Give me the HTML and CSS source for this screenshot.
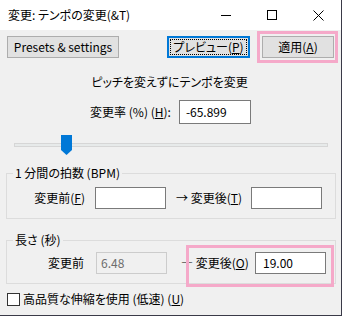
FILE: index.html
```html
<!DOCTYPE html>
<html lang="ja">
<head>
<meta charset="utf-8">
<link rel="stylesheet" href="styles.css">
</head>
<body>
<div class="win">
  <div class="titlebar">
    <div class="title">変更: テンポの変更(&amp;T)</div>
    <div class="ctrls">
      <div class="ctrl"><svg width="10" height="10" viewBox="0 0 10 10"><path d="M0 5.5H10" stroke="#000" stroke-width="1"/></svg></div>
      <div class="ctrl"><svg width="10" height="10" viewBox="0 0 10 10"><rect x="0.5" y="0.5" width="9" height="9" fill="none" stroke="#000" stroke-width="1"/></svg></div>
      <div class="ctrl"><svg width="11" height="11" viewBox="0 0 11 11"><path d="M0.5 0.5L10.5 10.5M10.5 0.5L0.5 10.5" stroke="#000" stroke-width="1"/></svg></div>
    </div>
  </div>
  <div class="body">
    <div class="toprow">
      <button class="btn presets">Presets &amp; settings</button>
      <button class="btn preview"><span class="focus">プレビュー(<u>P</u>)</span></button>
      <div class="applywrap">
        <button class="btn apply">適用(<u>A</u>)</button>
        <div class="hl hl-apply"></div>
      </div>
    </div>
    <div class="caption">ピッチを変えずにテンポを変更</div>
    <div class="raterow">
      <span class="lbl">変更率 (%) (<u>H</u>):</span>
      <div class="tb rate">-65.899</div>
    </div>
    <div class="slider">
      <div class="track"></div>
      <svg class="thumb" width="11" height="20" viewBox="0 0 11 20"><path d="M0 0H11V15L5.5 20L0 15Z" fill="#0078d7"/></svg>
    </div>
    <fieldset class="group g1">
      <legend>1 分間の拍数 (BPM)</legend>
      <div class="row">
        <span class="rl l1">変更前(<u>F</u>)</span>
        <div class="tb in1"></div>
        <span class="rl l2">→ 変更後(<u>T</u>)</span>
        <div class="tb"></div>
      </div>
    </fieldset>
    <fieldset class="group g2">
      <legend>長さ (秒)</legend>
      <div class="row">
        <span class="rl l1b">変更前</span>
        <div class="tb dis in1b">6.48</div>
        <span class="rl l2b">— 変更後(<u>O</u>)</span>
        <div class="tb in2b">19.00</div>
      </div>
      <div class="hl hl-len"></div>
    </fieldset>
    <label class="check">
      <span class="box"></span>
      <span>高品質な伸縮を使用 (低速) (<u>U</u>)</span>
    </label>
  </div>
</div>
</body>
</html>
```
FILE: styles.css
```css
* { box-sizing: border-box; }
html, body { margin: 0; padding: 0; }
body {
  width: 342px;
  height: 316px;
  overflow: hidden;
  font-family: "Noto Sans CJK JP", "Noto Sans", sans-serif;
  font-feature-settings: "palt";
  font-size: 12px;
  line-height: 16px;
  color: #000;
  background: #f0f0f0;
}
u { text-decoration: underline; text-underline-offset: 1px; }
.win {
  width: 342px;
  height: 316px;
  background: #f0f0f0;
  border-right: 1px solid #3a3a48;
  border-bottom: 1px solid #3a3a48;
  display: flex;
  flex-direction: column;
}
.titlebar {
  height: 30px;
  background: #fff;
  display: flex;
  align-items: center;
  justify-content: space-between;
  flex: none;
}
.title { padding-left: 8px; font-size: 12px; }
.ctrls { display: flex; height: 30px; }
.ctrl { width: 46px; height: 30px; display: flex; align-items: center; justify-content: center; }
.body { flex: 1; display: flex; flex-direction: column; }
.toprow {
  display: flex;
  align-items: flex-start;
  padding: 6px 0 0 7px;
  height: 28px;
}
.btn {
  font: inherit;
  font-feature-settings: "palt";
  height: 22px;
  margin: 0;
  padding: 0;
  background: #e1e1e1;
  border: 1px solid #adadad;
  color: #000;
  display: flex;
  align-items: center;
  justify-content: center;
}
.presets { width: 112px; }
.preview {
  width: 83px;
  margin-left: 48px;
  border: 2px solid #0078d7;
  padding: 1px;
}
.focus {
  flex: 1;
  align-self: stretch;
  border: 1px dotted #000;
  display: flex;
  align-items: center;
  justify-content: center;
}
.applywrap { position: relative; margin-left: 12px; }
.apply { width: 72px; }
.hl { position: absolute; border: 3px solid #f5a9c9; pointer-events: none; }
.hl-apply { left: -5px; top: -5px; width: 81px; height: 32px; }
.caption { text-align: center; margin-top: 16px; padding-right: 2px; }
.raterow {
  display: flex;
  align-items: center;
  justify-content: center;
  gap: 8px;
  margin-top: 10px;
  padding-left: 0;
}
.tb {
  height: 22px;
  width: 71px;
  background: #fff;
  border: 1px solid #7a7a7a;
  padding: 0 6px;
  display: flex;
  align-items: center;
}
.rate { width: 72px; height: 24px; }
.slider {
  position: relative;
  height: 20px;
  margin: 11px 0 0 14px;
  width: 314px;
}
.track {
  position: absolute;
  left: 0; right: 0; top: 8px;
  height: 4px;
  background: #e7eaea;
  border: 1px solid #d6d6d6;
}
.thumb { position: absolute; left: 47px; top: 0; }
.group {
  position: relative;
  margin: 11px 5px 0 6px;
  border: 1px solid #dcdcdc;
  padding: 7px 0 9px 0;
  min-width: 0;
}
.group legend {
  margin-left: 6px;
  padding: 0 2px;
  line-height: 14px;
}
.g2 { margin-top: 14px; padding-top: 5px; }
.row { display: flex; align-items: center; height: 22px; }
.rl { white-space: nowrap; }
.l1 { width: 78px; text-align: right; }
.in1 { margin-left: 10px; }
.l2 { margin-left: 10px; width: 75px; }
.l1b { width: 77px; text-align: right; }
.in1b { margin-left: 12px; }
.dis { background: #f0f0f0; border-color: #cccccc; color: #6d6d6d; padding: 0 4px; }
.l2b { margin-left: 14px; width: 74px; }
.in2b { padding: 0 7px; }
.hl-len { left: 179px; top: -2px; width: 148px; height: 42px; }
.check {
  display: flex;
  align-items: center;
  gap: 3px;
  margin: 7px 0 0 7px;
  height: 16px;
}
.box {
  width: 13px;
  height: 13px;
  border: 1px solid #333;
  background: #fff;
}
```
